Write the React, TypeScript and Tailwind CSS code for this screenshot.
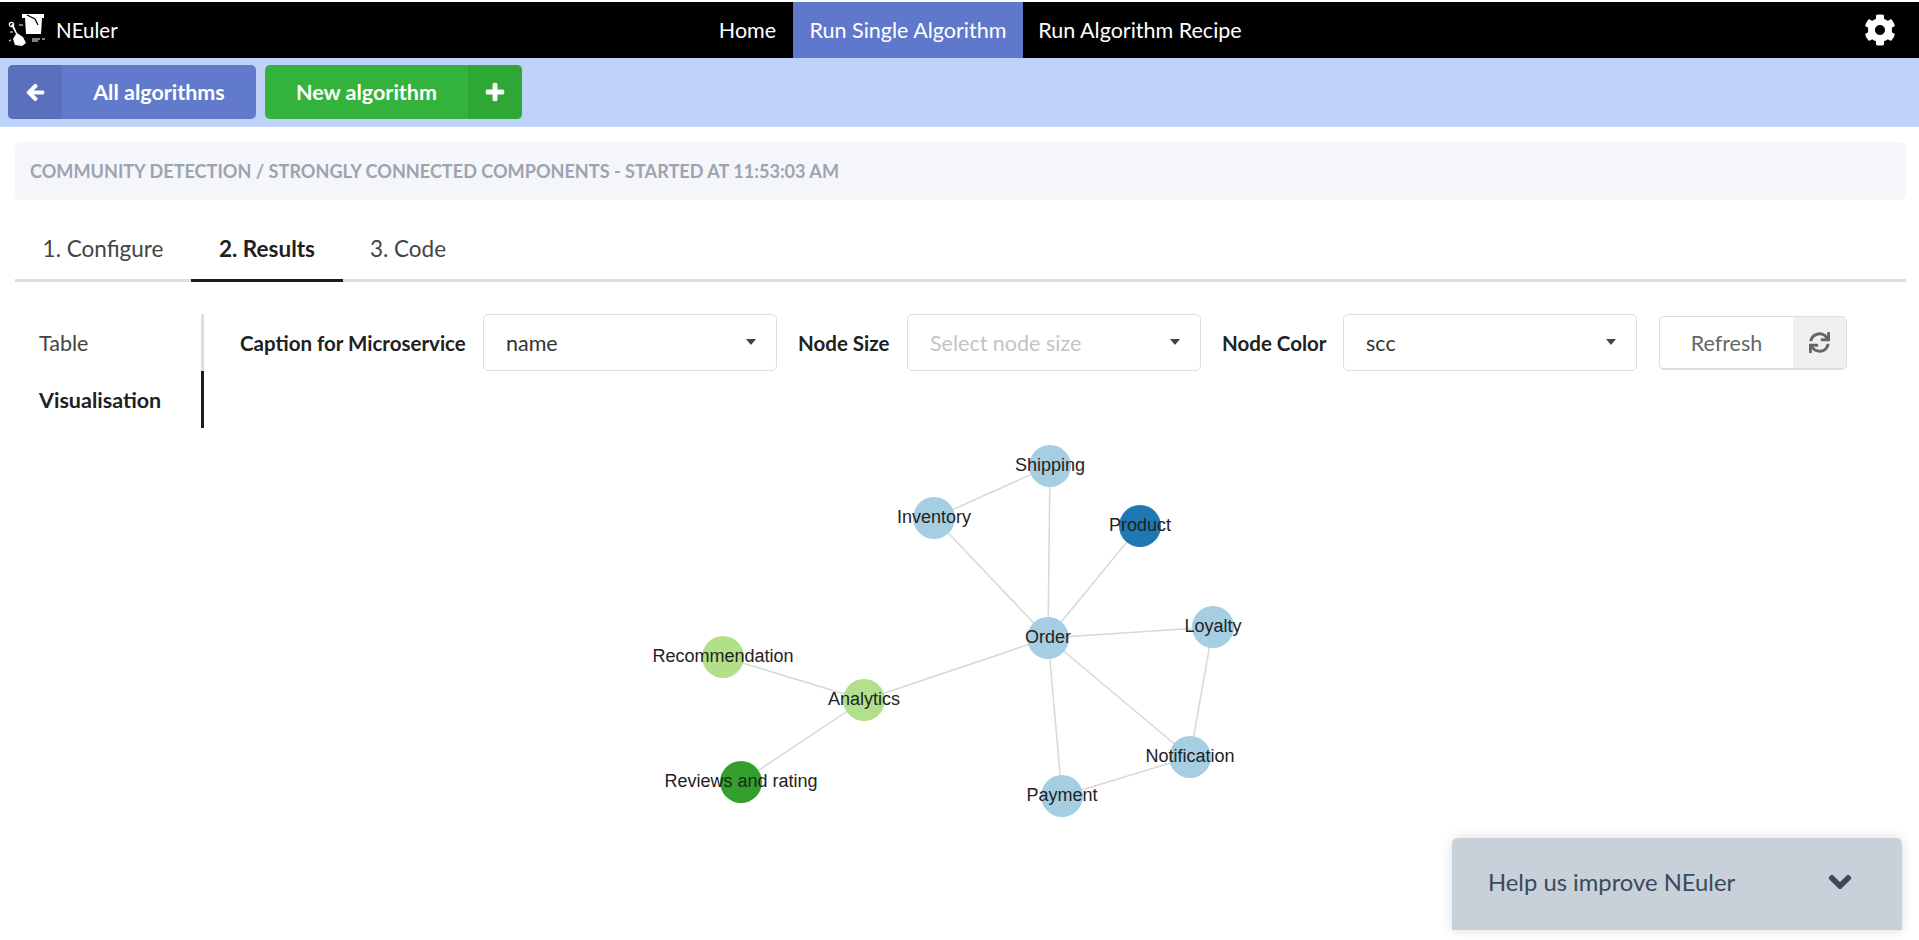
import { FaArrowLeft, FaChevronDown, FaCog, FaPlus, FaSync } from "react-icons/fa"

const nodes = [
  { label: "Shipping", x: 1050, y: 466, color: "#a6cee3" },
  { label: "Inventory", x: 934, y: 518, color: "#a6cee3" },
  { label: "Product", x: 1140, y: 526, color: "#1f78b4" },
  { label: "Order", x: 1048, y: 638, color: "#a6cee3" },
  { label: "Loyalty", x: 1213, y: 627, color: "#a6cee3" },
  { label: "Recommendation", x: 723, y: 657, color: "#b2df8a" },
  { label: "Analytics", x: 864, y: 700, color: "#b2df8a" },
  { label: "Notification", x: 1190, y: 757, color: "#a6cee3" },
  { label: "Payment", x: 1062, y: 796, color: "#a6cee3" },
  { label: "Reviews and rating", x: 741, y: 782, color: "#33a02c" },
]

const edges = [
  ["Shipping", "Inventory"],
  ["Shipping", "Order"],
  ["Inventory", "Order"],
  ["Product", "Order"],
  ["Loyalty", "Order"],
  ["Loyalty", "Notification"],
  ["Order", "Notification"],
  ["Order", "Payment"],
  ["Order", "Analytics"],
  ["Notification", "Payment"],
  ["Recommendation", "Analytics"],
  ["Reviews and rating", "Analytics"],
]

const find = (label: string) => nodes.find((n) => n.label === label)!

const Logo = () => (
  <svg width="40" height="36" viewBox="0 0 40 36" className="shrink-0">
    <path d="M14 2h22v4h-2l-1 16H18L17 6h-3z" fill="#fff" />
    <path d="M19 3l8 4 3 6" stroke="#000" strokeWidth="1.2" fill="none" />
    <path d="M3 13l2-1 4 9 6 4 3 6-4 3-7-1-2-6 3-5z" fill="#fff" />
    <circle cx="3.5" cy="12.5" r="2.2" fill="none" stroke="#fff" strokeWidth="1.2" />
    <path d="M11 13h4M5 20H2M3 28l-2 1M24 27h8M24 29h6M34 27h3" stroke="#aaa" strokeWidth="1.5" />
  </svg>
)

const Select = ({ value, placeholder }: { value?: string; placeholder?: string }) => (
  <div className="flex h-[57px] w-[294px] items-center justify-between rounded-[5px] border border-[#dcdee0] bg-white pl-[22px] pr-[20px]">
    <span className={value ? "pt-[1px] text-[#333]" : "pt-[1px] text-[#c4c4c4]"}>{value ?? placeholder}</span>
    <span className="mb-[2px] h-0 w-0 border-x-[5.5px] border-t-[6px] border-x-transparent border-t-[#444]" />
  </div>
)

const App = () => {
  return (
    <div className="relative h-[940px] overflow-hidden bg-white pt-[2px] font-['Lato',sans-serif] text-[21.5px] text-[#212121]">
      <header className="flex h-[56px] items-center bg-black pl-[8px] pr-[23px] text-white">
        <Logo />
        <span className="ml-[8px] w-[646px] text-[20.5px]">NEuler</span>
        <nav className="flex h-full items-center text-center text-[21.5px]">
          <a className="flex h-full w-[91px] items-center justify-center">Home</a>
          <a className="flex h-full w-[230px] items-center justify-center bg-[#6078cc]">Run Single Algorithm</a>
          <a className="flex h-full w-[234px] items-center justify-center">Run Algorithm Recipe</a>
        </nav>
        <FaCog className="ml-auto text-[32px]" />
      </header>

      <div className="flex h-[69px] items-start gap-[9px] bg-[#bfd2f7] pl-[8px] pt-[7px] font-bold text-white">
        <button className="flex h-[54px] w-[248px] overflow-hidden rounded-[5px] bg-[#627acc]">
          <span className="flex h-full w-[54px] items-center justify-center bg-[#5a70bd]">
            <FaArrowLeft className="text-[19px]" stroke="currentColor" strokeWidth={30} />
          </span>
          <span className="flex-1 text-center leading-[54px]">All algorithms</span>
        </button>
        <button className="flex h-[54px] w-[257px] overflow-hidden rounded-[5px] bg-[#33b33b]">
          <span className="flex-1 text-center leading-[54px]">New algorithm</span>
          <span className="flex h-full w-[54px] items-center justify-center bg-[#2fa736]">
            <FaPlus className="text-[20px]" stroke="currentColor" strokeWidth={30} />
          </span>
        </button>
      </div>

      <main className="pl-[15px] pr-[13px] pt-[15px]">
        <div className="flex h-[58px] items-center rounded-[6px] bg-[#f5f6fa] pl-[15px] pt-[2px] text-[18.1px] font-bold text-[#9aa5b1]">
          COMMUNITY DETECTION / STRONGLY CONNECTED COMPONENTS - STARTED AT 11:53:03 AM
        </div>

        <div className="mt-[17px] flex h-[65px] border-b-[3px] border-[#dedede] text-[22.5px]">
          <a className="mb-[-3px] flex w-[176px] items-center justify-center pb-[2px] text-[#444]">1. Configure</a>
          <a className="mb-[-3px] flex w-[152px] items-center justify-center border-b-[3px] border-[#1b1c1d] pt-[1px] font-bold">2. Results</a>
          <a className="mb-[-3px] flex w-[130px] items-center justify-center pb-[2px] text-[#444]">3. Code</a>
        </div>

        <div className="mt-[32px] flex">
          <aside className="w-[189px] shrink-0">
            <div className="flex h-[57px] items-center border-r-[3px] border-[#dedede] pl-[24px] pt-[1px] text-[#444]">Table</div>
            <div className="flex h-[57px] items-center border-r-[3px] border-[#1b1c1d] pl-[24px] pt-[1px] font-bold">Visualisation</div>
          </aside>
          <div className="flex h-[57px] items-center pl-[36px] [&>label]:pt-[1px] [&>label]:text-[20.5px] [&>label]:font-bold">
            <label className="w-[243px]">Caption for Microservice</label>
            <Select value="name" />
            <label className="w-[130px] pl-[21px]">Node Size</label>
            <Select placeholder="Select node size" />
            <label className="w-[142px] pl-[21px]">Node Color</label>
            <Select value="scc" />
            <button className="ml-[22px] flex h-[54px] w-[188px] overflow-hidden rounded-[5px] border border-b-2 border-[#dcdee0] bg-white">
              <span className="flex-1 text-center leading-[53px] text-[#666]">Refresh</span>
              <span className="flex h-full w-[53px] items-center justify-center bg-[#f0f0f0] text-[#666]">
                <FaSync className="text-[21px]" />
              </span>
            </button>
          </div>
        </div>
      </main>

      <svg width="640" height="400" viewBox="630 430 640 400" className="ml-[630px] mt-[2px] block">
        {edges.map(([a, b]) => {
          const from = find(a)
          const to = find(b)
          return <line key={a + b} x1={from.x} y1={from.y} x2={to.x} y2={to.y} stroke="#d8d8d8" strokeWidth="1.5" />
        })}
        {nodes.map((n) => (
          <circle key={n.label} cx={n.x} cy={n.y} r="21" fill={n.color} />
        ))}
        {nodes.map((n) => (
          <text key={n.label} x={n.x} y={n.y + 5} textAnchor="middle" fill="#222" className="font-['Liberation_Sans',sans-serif] text-[18px]">
            {n.label}
          </text>
        ))}
      </svg>

      <div className="absolute bottom-[10px] right-[17px] flex h-[92px] w-[450px] items-center justify-between rounded-t-[6px] bg-[#c8d0d9] pl-[36px] pr-[50px] text-[23.8px] text-[#3a4a5a] shadow-[0_0_12px_rgba(0,0,0,0.15)]">
        <span className="mt-[-3px]">Help us improve NEuler</span>
        <FaChevronDown className="mt-[-4px] text-[24px]" stroke="currentColor" strokeWidth={40} />
      </div>
    </div>
  )
}

export default App
